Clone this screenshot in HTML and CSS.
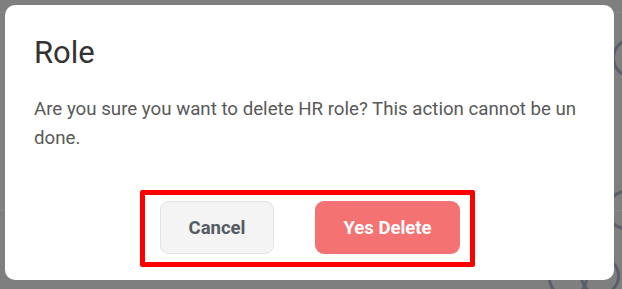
FILE: index.html
```html
<!DOCTYPE html>
<html lang="en">

<head>
  <meta charset="UTF-8" />
  <meta name="viewport" content="width=device-width, initial-scale=1.0" />
  <title>Role</title>
  <link rel="stylesheet" href="styles.css">
</head>

<body>

  <!-- dimmed page behind the modal -->
  <div class="page">
    <div class="page-header"></div>
    <div class="page-row"></div>
    <span class="avatar avatar-top"></span>
    <span class="avatar avatar-mid"></span>
    <span class="avatar avatar-bottom-a"></span>
    <span class="avatar avatar-bottom-b"></span>
  </div>

  <div class="overlay">
    <div class="modal">
      <h2 class="modal-title">Role</h2>
      <p class="modal-text">Are you sure you want to delete HR role? This action cannot be un done.</p>

      <div class="modal-actions">
        <div class="actions-box">
          <button class="btn btn-cancel">Cancel</button>
          <button class="btn btn-delete">Yes Delete</button>
        </div>
      </div>
    </div>
  </div>

</body>

</html>
```

FILE: styles.css
```css
* {
  margin: 0;
  padding: 0;
  box-sizing: border-box;
}

body {
  font-family: Roboto, 'Liberation Sans', sans-serif;
  background: #7f7f7f;
  width: 622px;
  height: 289px;
  overflow: hidden;
  position: relative;
}

.page {
  height: 100%;
}

.page-header {
  height: 13px;
  border-bottom: 1px solid #8a8a8a;
}

.page-row {
  margin-top: 197px;
  border-bottom: 1px solid #8a8a8a;
}

.avatar {
  position: absolute;
  width: 40px;
  height: 40px;
  border-radius: 50%;
  border: 3px solid #5a5f6b;
}

.avatar-top {
  top: 38px;
  left: 612px;
}

.avatar-mid {
  top: 190px;
  left: 606px;
}

.avatar-bottom-a {
  top: 258px;
  left: 548px;
}

.avatar-bottom-b {
  top: 256px;
  left: 580px;
}

.overlay {
  position: absolute;
  top: 5px;
  left: 5px;
}

.modal {
  width: 609px;
  height: 275px;
  background: #fff;
  border-radius: 10px;
  padding: 30px 24px 0 29px;
}

.modal-title {
  font-size: 31px;
  font-weight: 400;
  line-height: 36px;
  color: #333;
}

.modal-text {
  margin-top: 24px;
  font-size: 18.7px;
  line-height: 29px;
  color: #595959;
}

.modal-actions {
  display: flex;
  justify-content: center;
  margin-top: 37px;
  margin-right: 9px;
}

.actions-box {
  display: flex;
  gap: 41px;
  border: 5px solid #ff0000;
  border-radius: 2px;
  padding: 6px 10px 8px 15px;
}

.btn {
  height: 53px;
  border-radius: 9px;
  font-family: Roboto, 'Liberation Sans', sans-serif;
  font-size: 18.5px;
  font-weight: 700;
  cursor: pointer;
}

.btn-cancel {
  width: 114px;
  background: #f4f4f5;
  border: 1px solid #e1e3e8;
  color: #555b63;
}

.btn-delete {
  width: 145px;
  background: #f57272;
  border: none;
  color: #fff;
}
```
